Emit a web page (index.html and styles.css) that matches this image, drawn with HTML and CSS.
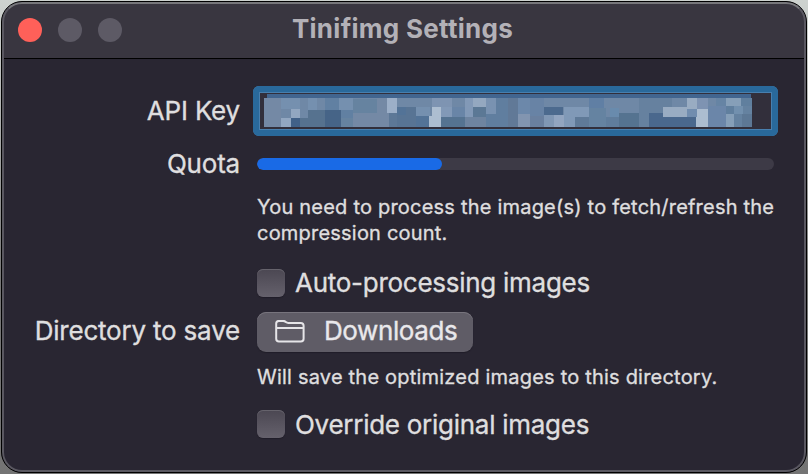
FILE: index.html
```html
<!DOCTYPE html>
<html lang="en">
<head>
<meta charset="utf-8">
<title>Tinifimg Settings</title>
<link rel="stylesheet" href="styles.css">
</head>
<body>
<main class="window">
  <header class="titlebar">
    <div class="lights"><i class="light close"></i><i class="light"></i><i class="light"></i></div>
    <h1 class="title">Tinifimg Settings</h1>
  </header>
  <section class="form">
    <div class="row key-row">
      <span class="label">API Key</span>
      <div class="field">
        <svg class="mosaic" width="488" height="33" viewBox="42 42 1464 99" preserveAspectRatio="none" shape-rendering="crispEdges" aria-hidden="true">
          <path fill="#42658f" d="M51 42H1503V54H51z"/>
          <path fill="#6f88a6" d="M42 54H1506V141H42z"/>
          <path fill="#7489a5" d="M42 54H93V141H42zM309 98H417V141H309zM381 54H411V98H381z"/>
          <path fill="#7590af" d="M93 54H150V87H93zM174 54H201V90H174zM267 54H309V90H267zM498 81H540V108H498z"/>
          <path fill="#92a7c1" d="M93 114H123V141H93zM123 87H150V114H123z"/>
          <path fill="#416188" d="M123 114H150V141H123z"/>
          <path fill="#56728f" d="M150 114H174V141H150zM174 90H225V141H174z"/>
          <path fill="#466487" d="M225 90H273V141H225z"/>
          <path fill="#6180a2" d="M225 54H267V90H225zM273 90H309V114H273z"/>
          <path fill="#6683a0" d="M273 114H309V141H273zM309 57H381V98H309z"/>
          <path fill="#9cafc8" d="M411 54H441V99H411z"/>
          <path fill="#5d7897" d="M417 99H441V141H417z"/>
          <path fill="#587494" d="M441 81H498V141H441z"/>
          <path fill="#537397" d="M441 81H468V106H441zM498 108H537V141H498z"/>
          <path fill="#adbed1" d="M537 108H546V81H573V141H537z"/>
          <path fill="#7e94b2" d="M546 54H606V81H546z"/>
          <path fill="#8299b7" d="M573 81H606V111H573zM645 54H669V111H645z"/>
          <path fill="#6985a7" d="M606 81H645V111H606z"/>
          <path fill="#557391" d="M573 111H645V141H573z"/>
          <path fill="#94a8c0" d="M669 54H708V81H669z"/>
          <path fill="#5b7895" d="M669 81H708V111H669z"/>
          <path fill="#6e84a0" d="M645 111H708V141H645z"/>
          <path fill="#7992b1" d="M708 54H738V102H708z"/>
          <path fill="#607e9f" d="M738 54H774V141H708V102H738z"/>
          <path fill="#617997" d="M774 54H804V141H774z"/>
          <path fill="#6c88aa" d="M804 54H840V102H804z"/>
          <path fill="#8295b0" d="M804 102H840V141H804z"/>
          <path fill="#6883a5" d="M840 54H882V108H840z"/>
          <path fill="#6a809f" d="M840 108H882V141H840z"/>
          <path fill="#4c6a8e" d="M882 81H939V105H882z"/>
          <path fill="#8097b4" d="M882 105H912V141H882z"/>
          <path fill="#92a5c0" d="M912 105H942V141H912z"/>
          <path fill="#8099b7" d="M942 81H1017V111H975V141H942z"/>
          <path fill="#5f7a98" d="M975 111H1017V141H975z"/>
          <path fill="#607fa4" d="M1017 54H1062V84H1017z"/>
          <path fill="#6583a1" d="M1017 84H1068V141H1017z"/>
          <path fill="#607d9c" d="M1068 111H1107V141H1068z"/>
          <path fill="#698bad" d="M1080 84H1107V111H1080z"/>
          <path fill="#557390" d="M1107 99H1167V141H1107z"/>
          <path fill="#66819f" d="M1167 54H1266V99H1197V141H1167z"/>
          <path fill="#4a688d" d="M1197 99H1338V141H1197z"/>
          <path fill="#99acc2" d="M1239 81H1311V111H1239zM1311 54H1341V87H1311z"/>
          <path fill="#718daf" d="M1311 87H1341V111H1311z"/>
          <path fill="#7e93b2" d="M1341 54H1374V87H1341z"/>
          <path fill="#acbdd0" d="M1341 87H1374V141H1338V111H1341z"/>
          <path fill="#6b86a9" d="M1374 78H1428V141H1374z"/>
          <path fill="#6684a4" d="M1398 54H1428V78H1398z"/>
          <path fill="#869fb8" d="M1428 54H1473V78H1428zM1428 102H1452V141H1428z"/>
          <path fill="#607f9e" d="M1428 78H1452V102H1428zM1473 54H1506V78H1473z"/>
          <path fill="#7290ae" d="M1452 78H1479V102H1452z"/>
          <path fill="#6582a0" d="M1452 102H1476V141H1452zM1479 78H1506V102H1479z"/>
          <path fill="#5d7895" d="M1476 102H1506V141H1476z"/>
        </svg>
      </div>
    </div>
    <div class="row quota-row">
      <span class="label">Quota</span>
      <div class="track"><div class="fill"></div></div>
    </div>
    <p class="help quota-help">You need to process the image(s) to fetch/refresh the<br>compression count.</p>
    <div class="check auto"><i class="box"></i><span class="check-text">Auto-processing images</span></div>
    <div class="row dir-row">
      <span class="label dir">Directory to save</span>
      <div class="button">
        <svg class="folder" width="30" height="24" viewBox="0 0 30 24" fill="none" stroke="#e6e5e8" stroke-width="2" aria-hidden="true">
          <path d="M1.2 18.8V3.6Q1.2 .9 3.9 .9H8.2Q9.4 .9 10.3 1.6L11.2 2.3Q12 2.9 13.2 2.9H25.8Q28.6 2.9 28.6 5.7V18.8Q28.6 21.6 25.8 21.6H4Q1.2 21.6 1.2 18.8zM1.2 7.9H28.6"/>
        </svg>
        <span class="downloads">Downloads</span>
      </div>
    </div>
    <p class="help dir-help">Will save the optimized images to this directory.</p>
    <div class="check over"><i class="box"></i><span class="check-text">Override original images</span></div>
  </section>
</main>
</body>
</html>
```
FILE: styles.css
```css
* { box-sizing: border-box; }
body {
  margin: 0;
  width: 808px;
  height: 474px;
  padding: 1px;
  overflow: hidden;
  background: linear-gradient(#cdd2cf, #c4c6c5 12%, #777 60%, #747474);
  font-family: Inter, "Liberation Sans", sans-serif;
  color: #dfdedf;
}
.window {
  position: relative;
  width: 806px;
  height: 472px;
  border: 1px solid #000;
  border-radius: 21px;
  overflow: hidden;
  background: #292632;
}
.window::after {
  content: "";
  position: absolute;
  inset: 0;
  border: 2px solid #5a5861;
  border-top-color: #77777b;
  border-radius: 20px;
}
.titlebar {
  height: 57px;
  display: grid;
  grid-template-columns: 120px 1fr 120px;
  align-items: center;
  background: #393640;
  border-bottom: 1px solid #000;
}
.lights { display: flex; gap: 16px; padding-left: 16px; }
.light { width: 24px; height: 24px; border-radius: 50%; background: #5d5a65; }
.close { background: #ff6059; }
.title {
  margin: 0;
  padding-bottom: 2px;
  padding-right: 3px;
  text-align: center;
  font-size: 26px;
  line-height: 30px;
  font-weight: 700;
  letter-spacing: 0.28px;
  color: #b3b1b7;
  white-space: nowrap;
}
.form { padding-top: 27px; }
.row { display: flex; align-items: center; }
.label {
  width: 238px;
  flex: none;
  text-align: right;
  font-size: 26px;
  line-height: 32px;
  letter-spacing: -0.2px;
  -webkit-text-stroke: 0.35px currentColor;
  white-space: nowrap;
}
.dir { padding-bottom: 2px; }
.key-row { height: 50px; }
.field {
  width: 525px;
  height: 50px;
  margin-left: 13px;
  padding: 7px 10px;
  border: 0;
  border-radius: 6px;
  background: #322f3b;
  box-shadow: inset 0 0 0 6px #29699b, inset 0 0 0 7px #487fae;
}
.mosaic { display: block; margin: 1px 0 0 1px; }
.quota-row { height: 32px; margin-top: 12px; }
.track { width: 517px; height: 12px; margin-left: 17px; border-radius: 6px; background: #3d3a46; overflow: hidden; }
.fill { width: 185px; height: 12px; border-radius: 6px; background: #196ae6; }
.help { margin: 0 0 0 255px; font-size: 20px; line-height: 26px; letter-spacing: 0.21px; -webkit-text-stroke: 0.35px currentColor; white-space: nowrap; }
.quota-help { margin-top: 14px; }
.check { display: flex; align-items: center; height: 32px; margin-left: 255px; gap: 10px; font-size: 26px; white-space: nowrap; }
.check-text { letter-spacing: -0.27px; -webkit-text-stroke: 0.35px currentColor; }
.auto { margin-top: 21px; }
.auto .check-text { padding-bottom: 2px; }
.box {
  width: 28px;
  height: 28px;
  border-radius: 6px;
  background: linear-gradient(#4b4752, #65616c);
  box-shadow: inset 0 1px 0 #66636c, 0 1px 1px #201d28;
}
.dir-row { height: 40px; margin-top: 13px; }
.button {
  display: flex;
  align-items: center;
  width: 216px;
  height: 40px;
  margin-left: 17px;
  padding-left: 18px;
  gap: 19px;
  border-radius: 9px;
  background: #5f5c66;
  box-shadow: inset 0 1px 0 #77747d, 0 1px 1px #201d28;
  font-size: 26px;
  color: #e9e8eb;
}
.folder { flex: none; }
.downloads { padding-bottom: 3px; letter-spacing: -0.4px; -webkit-text-stroke: 0.35px currentColor; }
.dir-help { margin-top: 12px; }
.over { margin-top: 18px; }
```
